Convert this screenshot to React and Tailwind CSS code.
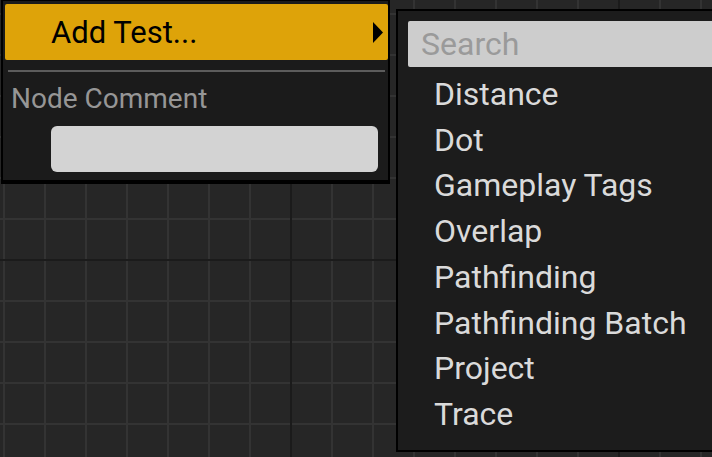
import React from "react";

const tests = [
  "Distance",
  "Dot",
  "Gameplay Tags",
  "Overlap",
  "Pathfinding",
  "Pathfinding Batch",
  "Project",
  "Trace",
];

const font = { fontFamily: "Roboto, 'Noto Sans', sans-serif" };

const ContextMenu = () => (
  <div className="absolute left-[1px] top-[-1px] h-[185px] w-[389px] border-2 border-b-4 border-black bg-[#1b1b1b] pl-[2px] pt-[3px]">
    <div className="flex h-[56px] items-center justify-between rounded-[2px] bg-[#dea309] pl-[46px] pr-[5px]">
      <span className="text-[31px] leading-none text-black">Add Test...</span>
      <svg width="10" height="21" viewBox="0 0 10 21" className="block">
        <polygon points="0,0 10,10.5 0,21" fill="#000" />
      </svg>
    </div>
    <div className="ml-[3px] mt-[10px] h-[2px] w-[377px] bg-[#5c5c5c]" />
    <div className="ml-[6px] mt-[12px] text-[28px] leading-[30px] text-[#969696]">Node Comment</div>
    <div className="ml-[46px] mt-[12px] h-[46px] w-[327px] rounded-[6px] bg-[#d3d3d3]" />
  </div>
);

const TestMenu = () => (
  <div className="absolute left-[396px] top-[9px] h-[443px] w-[340px] border-2 border-black bg-[#1c1c1c] pl-[10px] pt-[10px]">
    <div className="flex h-[46px] items-center rounded-l-[2px] bg-[#cdcdcd] pl-[13px]">
      <span className="text-[32px] leading-none text-[#9a9a9a]">Search</span>
    </div>
    <ul className="mt-[5px] pl-[26px]">
      {tests.map((t) => (
        <li key={t} className="text-[32px] leading-[45.7px] text-[#dadada]">
          {t}
        </li>
      ))}
    </ul>
  </div>
);

export default function App() {
  return (
    <div
      className="relative h-[457px] w-[712px] overflow-hidden bg-[#262626] bg-[linear-gradient(to_right,#1b1b1b_2px,transparent_2px),linear-gradient(to_bottom,#1b1b1b_2px,transparent_2px),linear-gradient(to_right,#333333_2px,transparent_2px),linear-gradient(to_bottom,#333333_2px,transparent_2px)] [background-position:290px_0,0_259px,3px_0,0_13px] [background-size:328px_328px,328px_328px,41px_41px,41px_41px]"
      style={font}
    >
      <ContextMenu />
      <TestMenu />
    </div>
  );
}
